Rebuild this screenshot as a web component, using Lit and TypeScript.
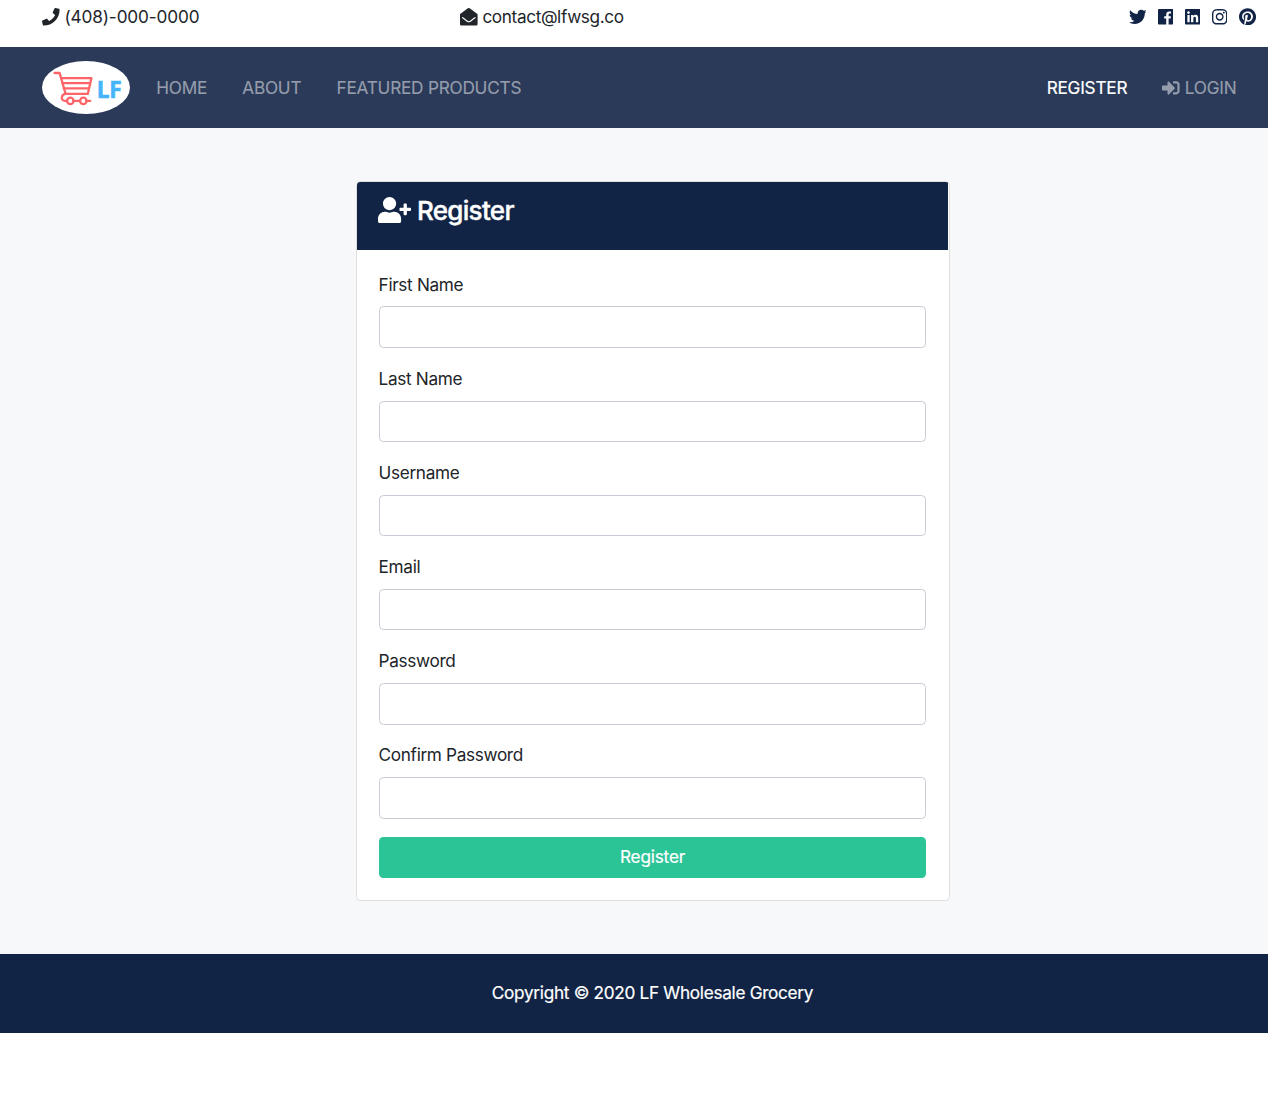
import { LitElement, html, css, svg } from "lit";
import { customElement, property } from "lit/decorators.js";

interface Glyph {
  w: number;
  d: string;
}

const GLYPHS: Record<string, Glyph> = {
  phone: {
    w: 512,
    d: "M493.4 24.6l-104-24c-11.3-2.6-22.9 3.3-27.5 13.9l-48 112c-4.2 9.8-1.4 21.3 6.9 28l60.6 49.6c-36 76.7-98.9 140.5-177.2 177.2l-49.6-60.6c-6.8-8.3-18.2-11.1-28-6.9l-112 48C3.9 366.5-2 378.1.6 389.4l24 104C27.1 504.2 36.7 512 48 512c256.1 0 464-207.5 464-464 0-11.2-7.7-20.9-18.6-23.4z",
  },
  envelope: {
    w: 512,
    d: "M512 464c0 26.51-21.49 48-48 48H48c-26.51 0-48-21.49-48-48V200.724a48 48 0 0 1 18.387-37.776c24.913-19.529 45.501-35.365 164.2-121.511C199.412 29.17 232.797-.347 256 .003c23.198-.354 56.596 29.172 73.413 41.433 118.687 86.137 139.303 101.995 164.2 121.512A48 48 0 0 1 512 200.724V464zm-65.666-196.605c-2.563-3.728-7.7-4.595-11.339-1.907-22.845 16.873-55.462 40.705-105.582 77.079-16.825 12.266-50.21 41.781-73.413 41.43-23.211.344-56.559-29.143-73.413-41.43-50.114-36.37-82.734-60.204-105.582-77.079-3.639-2.688-8.776-1.821-11.339 1.907l-9.072 13.196a7.998 7.998 0 0 0 1.839 10.967c22.887 16.899 55.454 40.69 105.303 76.868 20.274 14.781 56.524 47.813 92.264 47.573 35.724.242 71.961-32.771 92.263-47.573 49.85-36.179 82.418-59.97 105.303-76.868a7.998 7.998 0 0 0 1.839-10.967l-9.071-13.196z",
  },
  twitter: {
    w: 512,
    d: "M459.37 151.716c.325 4.548.325 9.097.325 13.645 0 138.72-105.583 298.558-298.558 298.558-59.452 0-114.68-17.219-161.137-47.106 8.447.974 16.568 1.299 25.34 1.299 49.055 0 94.213-16.568 130.274-44.832-46.132-.975-84.792-31.188-98.112-72.772 6.498.974 12.995 1.624 19.818 1.624 9.421 0 18.843-1.3 27.614-3.573-48.081-9.747-84.143-51.98-84.143-102.985v-1.299c13.969 7.797 30.214 12.67 47.431 13.319-28.264-18.843-46.781-51.005-46.781-87.391 0-19.492 5.197-37.36 14.294-52.954 51.655 63.675 129.3 105.258 216.365 109.807-1.624-7.797-2.599-15.918-2.599-24.04 0-57.828 46.782-104.934 104.934-104.934 30.213 0 57.502 12.67 76.67 33.137 23.715-4.548 46.456-13.32 66.599-25.34-7.798 24.366-24.366 44.833-46.132 57.827 21.117-2.273 41.584-8.122 60.426-16.243-14.292 20.791-32.161 39.308-52.628 54.253z",
  },
  facebook: {
    w: 448,
    d: "M448 56.7v398.5c0 13.7-11.1 24.7-24.7 24.7H309.1V306.5h58.2l8.7-67.6h-67v-43.2c0-19.6 5.4-32.9 33.5-32.9h35.8v-60.5c-6.2-.8-27.4-2.7-52.2-2.7-51.6 0-87 31.5-87 89.4v49.9h-58.4v67.6h58.4V480H24.7C11.1 480 0 468.9 0 455.3V56.7C0 43.1 11.1 32 24.7 32h398.5c13.7 0 24.8 11.1 24.8 24.7z",
  },
  linkedin: {
    w: 448,
    d: "M416 32H31.9C14.3 32 0 46.5 0 64.3v383.4C0 465.5 14.3 480 31.9 480H416c17.6 0 32-14.5 32-32.3V64.3c0-17.8-14.4-32.3-32-32.3zM135.4 416H69V202.2h66.5V416zm-33.2-243c-21.3 0-38.5-17.3-38.5-38.5S80.9 96 102.2 96c21.2 0 38.5 17.3 38.5 38.5 0 21.3-17.2 38.5-38.5 38.5zm282.1 243h-66.4V312c0-24.8-.5-56.7-34.5-56.7-34.6 0-39.9 27-39.9 54.9V416h-66.4V202.2h63.7v29.2h.9c8.9-16.8 30.6-34.5 62.9-34.5 67.2 0 79.7 44.3 79.7 101.9V416z",
  },
  instagram: {
    w: 448,
    d: "M224.1 141c-63.6 0-114.9 51.3-114.9 114.9s51.3 114.9 114.9 114.9S339 319.5 339 255.9 287.7 141 224.1 141zm0 189.6c-41.1 0-74.7-33.5-74.7-74.7s33.5-74.7 74.7-74.7 74.7 33.5 74.7 74.7-33.6 74.7-74.7 74.7zm146.4-194.3c0 14.9-12 26.8-26.8 26.8-14.9 0-26.8-12-26.8-26.8s12-26.8 26.8-26.8 26.8 12 26.8 26.8zm76.1 27.2c-1.7-35.9-9.9-67.7-36.2-93.9-26.2-26.2-58-34.4-93.9-36.2-37-2.1-147.9-2.1-184.9 0-35.8 1.7-67.6 9.9-93.9 36.1s-34.4 58-36.2 93.9c-2.1 37-2.1 147.9 0 184.9 1.7 35.9 9.9 67.7 36.2 93.9s58 34.4 93.9 36.2c37 2.1 147.9 2.1 184.9 0 35.9-1.7 67.7-9.9 93.9-36.2 26.2-26.2 34.4-58 36.2-93.9 2.1-37 2.1-147.8 0-184.8zM398.8 388c-7.8 19.6-22.9 34.7-42.6 42.6-29.5 11.7-99.5 9-132.1 9s-102.7 2.6-132.1-9c-19.6-7.8-34.7-22.9-42.6-42.6-11.7-29.5-9-99.5-9-132.1s-2.6-102.7 9-132.1c7.8-19.6 22.9-34.7 42.6-42.6 29.5-11.7 99.5-9 132.1-9s102.7-2.6 132.1 9c19.6 7.8 34.7 22.9 42.6 42.6 11.7 29.5 9 99.5 9 132.1s2.7 102.7-9 132.1z",
  },
  pinterest: {
    w: 496,
    d: "M496 256c0 137-111 248-248 248-25.6 0-50.2-3.9-73.4-11.1 10.1-16.5 25.2-43.5 30.8-65 3-11.6 15.4-59 15.4-59 8.1 15.4 31.7 28.5 56.8 28.5 74.8 0 128.7-68.8 128.7-154.3 0-81.9-66.9-143.2-152.9-143.2-107 0-163.9 71.8-163.9 150.1 0 36.4 19.4 81.7 50.3 96.1 4.7 2.2 7.2 1.2 8.3-3.3.8-3.4 5-20.3 6.9-28.1.6-2.5.3-4.7-1.7-7.1-10.1-12.5-18.3-35.3-18.3-56.6 0-54.7 41.4-107.6 112-107.6 60.9 0 103.6 41.5 103.6 100.9 0 67.1-33.9 113.6-78 113.6-24.3 0-42.6-20.1-36.7-44.8 7-29.5 20.5-61.3 20.5-82.6 0-19-10.2-34.9-31.4-34.9-24.9 0-44.9 25.7-44.9 60.2 0 22 7.4 36.8 7.4 36.8s-24.5 103.8-29 123.2c-5 21.4-3 51.6-.9 71.2C65.4 450.9 0 361.1 0 256 0 119 111 8 248 8s248 111 248 248z",
  },
  signin: {
    w: 512,
    d: "M416 448h-84c-6.6 0-12-5.4-12-12v-40c0-6.6 5.4-12 12-12h84c17.7 0 32-14.3 32-32V160c0-17.7-14.3-32-32-32h-84c-6.6 0-12-5.4-12-12V76c0-6.6 5.4-12 12-12h84c53 0 96 43 96 96v192c0 53-43 96-96 96zm-47-201L201 79c-15-15-41-4.5-41 17v96H24c-13.3 0-24 10.7-24 24v96c0 13.3 10.7 24 24 24h136v96c0 21.5 26 32 41 17l168-168c9.3-9.4 9.3-24.6 0-34z",
  },
  userplus: {
    w: 640,
    d: "M624 208h-64v-64c0-8.8-7.2-16-16-16h-32c-8.8 0-16 7.2-16 16v64h-64c-8.8 0-16 7.2-16 16v32c0 8.8 7.2 16 16 16h64v64c0 8.8 7.2 16 16 16h32c8.8 0 16-7.2 16-16v-64h64c8.8 0 16-7.2 16-16v-32c0-8.8-7.2-16-16-16zm-400 48c70.7 0 128-57.3 128-128S294.7 0 224 0 96 57.3 96 128s57.3 128 128 128zm89.6 32h-16.7c-22.2 10.2-46.9 16-72.9 16s-50.6-5.8-72.9-16h-16.7C60.2 288 0 348.2 0 422.4V464c0 26.5 21.5 48 48 48h352c26.5 0 48-21.5 48-48v-41.6c0-74.2-60.2-134.4-134.4-134.4z",
  },
};

@customElement("ui-icon")
class UiIcon extends LitElement {
  @property() name = "phone";

  static styles = css`
    :host {
      display: inline-flex;
      flex: none;
      height: 1em;
    }
    .glyph {
      display: block;
      height: 1em;
      fill: currentColor;
    }
  `;

  render() {
    const g = GLYPHS[this.name];
    return html`<svg
      class="glyph"
      viewBox="0 0 ${g.w} 512"
      style="width:${g.w / 512}em"
      aria-hidden="true"
    >
      ${svg`<path d=${g.d}></path>`}
    </svg>`;
  }
}

@customElement("brand-logo")
class BrandLogo extends LitElement {
  static styles = css`
    :host {
      display: block;
    }
    .logo {
      display: block;
      width: 88px;
      height: 53px;
    }
    .plate {
      fill: #fff;
    }
    .cart {
      fill: none;
      stroke: #fc6468;
      stroke-width: 2.3;
      stroke-linecap: round;
      stroke-linejoin: round;
    }
    .name {
      fill: #45b4fb;
      stroke: #45b4fb;
      stroke-width: 0.6;
      font: 700 23.5px "Open Sans", sans-serif;
    }
  `;

  render() {
    return html`<svg class="logo" viewBox="0 0 88 53" role="img" aria-label="LF">
      <ellipse class="plate" cx="44" cy="26.5" rx="44" ry="26.5"></ellipse>
      <g class="cart">
        <path d="M12.6 12H17.6L23.6 32.9H45.8L49.4 17.2H19.2"></path>
        <path d="M20.5 22.2H48M21.8 27.4H47"></path>
        <path d="M23.6 32.9C18.8 33.4 18.6 39.9 23 39.9H25M31.6 39.9H38M44.6 39.9H48.2"></path>
        <circle cx="28.3" cy="39.9" r="3.2"></circle>
        <circle cx="41.3" cy="39.9" r="3.2"></circle>
      </g>
      <text class="name" x="54.7" y="37.3" textLength="24.6" lengthAdjust="spacingAndGlyphs">LF</text>
    </svg>`;
  }
}

const FIELDS = ["First Name", "Last Name", "Username", "Email", "Password", "Confirm Password"];
const SOCIAL = ["twitter", "facebook", "linkedin", "instagram", "pinterest"];

@customElement("app-root")
class AppRoot extends LitElement {
  static styles = css`
    :host {
      display: block;
      min-height: 1114px;
      background: #fff;
      color: #212529;
      font: 400 17.2px/26.4px Inter, "Liberation Sans", sans-serif;
      letter-spacing: -0.3px;
    }
    * {
      box-sizing: border-box;
    }
    .topbar {
      display: grid;
      grid-template-columns: 418px 1fr auto;
      height: 47px;
      padding: 4px 12.4px 0 42px;
    }
    .contact {
      display: flex;
      align-items: center;
      height: 26px;
      gap: 4.8px;
    }
    .tel {
      letter-spacing: -0.13px;
    }
    .mail {
      letter-spacing: -0.37px;
    }
    .contact ui-icon,
    .link ui-icon {
      font-size: 17.6px;
    }
    .contact ui-icon {
      margin-top: -0.6px;
    }
    .social {
      display: flex;
      align-items: center;
      height: 25px;
      gap: 11.5px;
      color: #112445;
      font-size: 17.6px;
    }
    .nav {
      display: flex;
      align-items: center;
      height: 81px;
      padding: 0 31.5px 0 42px;
      background: #2a3a58;
    }
    .links {
      display: flex;
      gap: 35.2px;
      margin-left: 26.2px;
      padding-top: 1px;
    }
    .links.end {
      margin-left: auto;
    }
    .link {
      display: flex;
      align-items: center;
      gap: 4.8px;
      color: #959dac;
      text-decoration: none;
      letter-spacing: -0.22px;
      -webkit-text-stroke: 0.15px currentColor;
    }
    .link ui-icon {
      margin-top: -1px;
    }
    .link.active {
      color: #fff;
      -webkit-text-stroke: 0.2px #fff;
    }
    .main {
      height: 826px;
      padding: 53px 0 0 356px;
      background: #f7f8fa;
    }
    .card {
      width: 594px;
      height: 720px;
      border: 1px solid #dfdfdf;
      border-radius: 4.4px;
      background: #fff;
      overflow: hidden;
    }
    .head {
      display: flex;
      align-items: flex-start;
      height: 68px;
      padding: 13px 21.4px;
      gap: 5.6px;
      background: #112445;
      color: #fff;
      margin-right: 1px;
    }
    .head ui-icon {
      font-size: 26.4px;
      margin-top: 2px;
    }
    .title {
      margin: 0;
      font-size: 26px;
      line-height: 32px;
      font-weight: 500;
      letter-spacing: -0.7px;
      -webkit-text-stroke: 0.4px #fff;
    }
    .form {
      padding: 21.6px 23px 0 22px;
    }
    .field {
      display: flex;
      flex-direction: column;
      height: 94.17px;
    }
    .label {
      margin: 0 0 8.4px -0.4px;
      letter-spacing: -0.34px;
    }
    .input {
      width: 100%;
      height: 41.6px;
      border: 1px solid #c8ccd4;
      border-radius: 4.4px;
      background: #fff;
      font: inherit;
      outline: none;
    }
    .submit {
      display: block;
      width: 100%;
      height: 41px;
      margin-top: 0.6px;
      border: 0;
      border-radius: 4.4px;
      background: #2bc497;
      color: #fff;
      font: inherit;
      letter-spacing: -0.2px;
      -webkit-text-stroke: 0.2px #fff;
      padding: 0 0 1px;
    }
    .footer {
      display: flex;
      justify-content: center;
      height: 79px;
      padding: 26px 0 0 37px;
      background: #112445;
      color: #fff;
      -webkit-text-stroke: 0.2px #fff;
    }
  `;

  render() {
    return html`
      <header class="topbar">
        <div class="contact"><ui-icon name="phone"></ui-icon><span class="tel">(408)-000-0000</span></div>
        <div class="contact"><ui-icon name="envelope"></ui-icon><span class="mail">contact@lfwsg.co</span></div>
        <div class="social">${SOCIAL.map((s) => html`<ui-icon name=${s}></ui-icon>`)}</div>
      </header>
      <nav class="nav">
        <brand-logo></brand-logo>
        <div class="links">
          <a class="link">HOME</a>
          <a class="link">ABOUT</a>
          <a class="link">FEATURED PRODUCTS</a>
        </div>
        <div class="links end">
          <a class="link active">REGISTER</a>
          <a class="link"><ui-icon name="signin"></ui-icon><span>LOGIN</span></a>
        </div>
      </nav>
      <main class="main">
        <section class="card">
          <div class="head">
            <ui-icon name="userplus"></ui-icon>
            <h4 class="title">Register</h4>
          </div>
          <form class="form">
            ${FIELDS.map(
              (f) => html`<label class="field"><span class="label">${f}</span><input class="input" /></label>`
            )}
            <button class="submit" type="button">Register</button>
          </form>
        </section>
      </main>
      <footer class="footer">Copyright © 2020 LF Wholesale Grocery</footer>
    `;
  }
}
